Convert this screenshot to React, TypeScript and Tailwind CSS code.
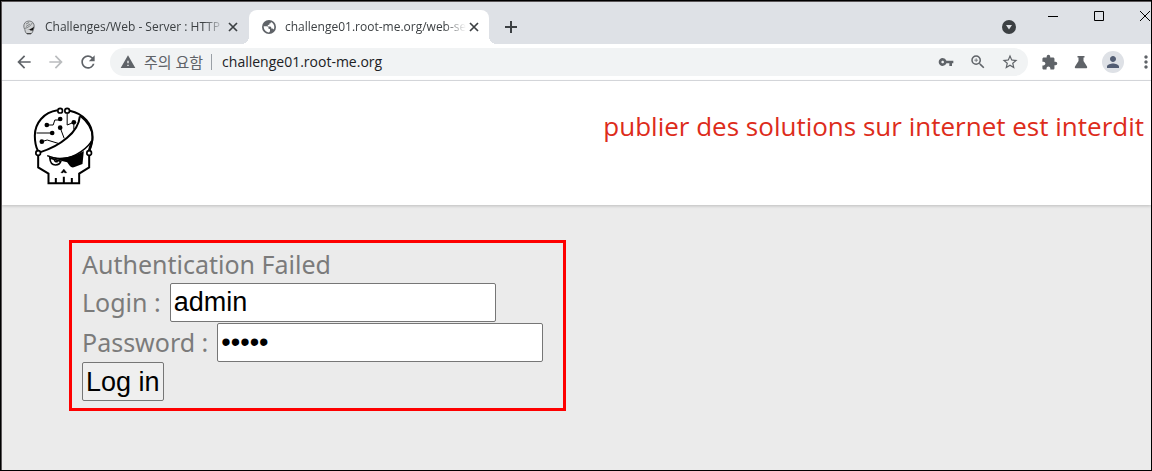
import { useState } from 'react';
import type { ReactNode } from 'react';
import {
  MdArrowBack,
  MdArrowForward,
  MdRefresh,
  MdWarning,
  MdVpnKey,
  MdZoomIn,
  MdStarBorder,
  MdExtension,
  MdPerson,
  MdMoreVert,
} from 'react-icons/md';

function SkullLogo({ className }: { className: string }) {
  return (
    <svg viewBox="40 36 182 234" className={className} fill="none" stroke="currentColor" aria-label="Root Me" role="img">
      {/* Skull outline */}
      <path d="M113 46C72 52 45 84 45 122C45 142 49 157 54 167" strokeWidth="6" />
      <path d="M150 47C192 56 218 88 218 124C218 144 213 158 208 167" strokeWidth="6" />
      <path d="M55 180V217L86 236V265H178V236L208 217V180" strokeWidth="6" />
      <path d="M108 265V249M132 265V245M156 265V249" strokeWidth="6" />
      {/* Bandana */}
      <path d="M60 172C120 154 176 112 180 64" strokeWidth="6" />
      <path d="M180 62C208 84 222 112 217 140" strokeWidth="5" />
      <path d="M216 138C192 172 148 196 112 191C100 189 92 186 82 182" strokeWidth="4" />
      <path d="M208 166L216 138" strokeWidth="7" />
      {/* Eyes and nose */}
      <path d="M82 180C108 194 156 190 192 168L188 207L164 216C158 219 152 216 148 210L142 202L126 198Z" fill="currentColor" stroke="none" />
      <path d="M90 189C91 203 98 210 107 210C115 210 121 206 123 199Z" fill="#fff" strokeWidth="5" />
      <path d="M103 193C104 200 109 202 114 199" strokeWidth="4" />
      <path d="M123 233L132 222L141 233L135 234L132 230L129 234Z" fill="currentColor" strokeWidth="1" />
      {/* Circuit traces */}
      <path d="M81 90H100L105 75H121M50 114H97M66 140L82 135L118 146M121 98L133 130M142 50V90L162 82V103" strokeWidth="3" />
      <g fill="currentColor" stroke="none">
        <circle cx="81" cy="90" r="7" />
        <circle cx="121" cy="72" r="7" />
        <circle cx="97" cy="114" r="7" />
        <circle cx="66" cy="140" r="7" />
        <circle cx="121" cy="98" r="7" />
        <circle cx="162" cy="82" r="7" />
      </g>
      <g fill="#fff" strokeWidth="5">
        <circle cx="121" cy="47" r="7" />
        <circle cx="142" cy="47" r="7" />
        <circle cx="55" cy="174" r="7" />
        <circle cx="208" cy="174" r="7" />
      </g>
    </svg>
  );
}

function SkullFavicon() {
  return (
    <svg viewBox="0 0 12 15" className="w-3 h-[15px]" fill="none" stroke="#76797c">
      <path d="M6 1C2.500 1 .8 3.500.8 6c0 1.500.4 2.500 1 3.500l.6 2.500L4 14h4l1.600-2 .8-2.500c.6-1 .8-2 .8-3.500C11.200 3 9 1 6 1z" fill="#d0d2d4" />
      <path d="M1.500 8.500C5 8 8.500 5 9.500 2.500M3 4l3-1.500M3 6.500L7 4" strokeWidth=".9" />
      <path d="M3 9.500C6 10 9 8.500 11 6.500L10 10.500 7.500 10.500 6.500 9.500z" fill="#111" stroke="none" />
      <path d="M4 13.500h4" stroke="#444" />
    </svg>
  );
}

function Globe() {
  return (
    <svg viewBox="0 0 14 14" className="size-[14px]">
      <circle cx="7" cy="7" r="7" fill="#5f6368" />
      <path d="M1.700 6.200l3.600.1 1.200 1.200v1.300l1.500.2v2.200l-1 1.200C4 12 1.700 9.800 1.700 6.200z" fill="#fff" />
      <path d="M8.800 2c2.200.8 3.500 2.800 3.500 5 0 1-.2 1.800-.6 2.500L10.500 8.500H9.200V7.300L8.300 6.400H5.800V5l1.500-.2.3-1.500h1.200z" fill="#fff" />
    </svg>
  );
}

function Flask() {
  return (
    <svg viewBox="0 0 14 14" className="size-[14px]" fill="currentColor">
      <path d="M3.500 1h7v1.500H9.500V6L13 11.500c.6 1-.1 1.800-1 1.800H2c-.9 0-1.600-.8-1-1.800L4.500 6V2.500h-1z" />
    </svg>
  );
}

interface TabProps {
  title: string;
  icon: ReactNode;
  active?: boolean;
}

function Tab({ title, icon, active }: TabProps) {
  return (
    <div
      className={`relative flex items-center h-[34px] w-60 pl-3 pr-2 rounded-t-lg ${active ? 'bg-white' : ''}`}
    >
      {active && (
        <>
          <span className="absolute bottom-0 -left-2 size-2 bg-[radial-gradient(circle_at_0_0,#dee1e6_8px,#fff_8px)]" />
          <span className="absolute bottom-0 -right-2 size-2 bg-[radial-gradient(circle_at_100%_0,#dee1e6_8px,#fff_8px)]" />
        </>
      )}
      <span className="flex justify-center shrink-0 w-4">{icon}</span>
      <span className="flex-1 ml-2 whitespace-nowrap text-xs text-[#3c4043] [mask-image:linear-gradient(to_right,#000_88%,transparent)]">
        {title}
      </span>
      <button aria-label="Close tab" className="flex justify-center shrink-0 w-4 text-[#3c4043]">
        <svg viewBox="0 0 10 10" className="size-[10px]" stroke="currentColor" strokeWidth="1.7">
          <path d="M1 1l8 8M9 1L1 9" />
        </svg>
      </button>
    </div>
  );
}

function IconButton({ label, children }: { label: string; children: ReactNode }) {
  return (
    <button aria-label={label} className="flex items-center justify-center shrink-0 w-8 h-7">
      {children}
    </button>
  );
}

export default function App() {
  const [login, setLogin] = useState('admin');
  const [password, setPassword] = useState('admin');

  return (
    <div className="flex flex-col min-h-screen overflow-hidden border border-black bg-[#ebebeb] font-['Open_Sans','Noto_Sans_CJK_KR',sans-serif]">
      <div className="flex flex-col flex-1 border-t border-l border-[#5a5658]">
        {/* Tab strip */}
        <div className="flex items-end h-[42px] pl-[7px] overflow-hidden bg-[#dee1e6]">
          <Tab title="Challenges/Web - Server : HTTP" icon={<SkullFavicon />} />
          <Tab title="challenge01.root-me.org/web-se" icon={<Globe />} active />
          <button aria-label="New tab" className="flex items-center justify-center w-7 h-[34px] ml-2 text-[#3c4043]">
            <svg viewBox="0 0 12 12" className="size-3" stroke="currentColor" strokeWidth="2">
              <path d="M6 0v12M0 6h12" />
            </svg>
          </button>
          <div className="flex self-start ml-auto">
            <button aria-label="Search tabs" className="flex justify-center w-8 pt-[18px] mr-[5px]">
              <svg viewBox="0 0 14 14" className="size-[14px]">
                <circle cx="7" cy="7" r="7" fill="#3c4043" />
                <path d="M4 5h6L7 9.500z" fill="#dee1e6" />
              </svg>
            </button>
            <button aria-label="Minimize" className="flex justify-center w-[46px] pt-[9px]">
              <svg viewBox="0 0 10 10" className="size-[10px]" stroke="#000"><path d="M0 5.500h10" /></svg>
            </button>
            <button aria-label="Maximize" className="flex justify-center w-[46px] pt-[9px]">
              <svg viewBox="0 0 10 10" className="size-[10px]" fill="none" stroke="#000"><path d="M.5.5h9v9h-9z" /></svg>
            </button>
            <button aria-label="Close" className="flex justify-center w-[46px] pt-[9px] -mr-[17px]">
              <svg viewBox="0 0 10 10" className="size-[10px]" stroke="#000"><path d="M0 0l10 10M10 0L0 10" /></svg>
            </button>
          </div>
        </div>

        {/* Toolbar */}
        <div className="flex items-center h-[37px] pl-[6px] border-b border-[#dadce0] bg-white text-[#5f6368]">
          <IconButton label="Back"><MdArrowBack size={20} /></IconButton>
          <IconButton label="Forward"><MdArrowForward size={20} color="#babcbe" /></IconButton>
          <IconButton label="Reload"><MdRefresh size={20} /></IconButton>
          <div className="flex items-center flex-1 h-7 ml-1.5 pl-2.5 pr-0.5 rounded-full bg-[#f1f3f4]">
            <MdWarning size={16} className="shrink-0" />
            <span className="ml-2 pr-2 border-r border-[#9aa0a6] text-[15px] leading-4 whitespace-nowrap">주의 요함</span>
            <input
              aria-label="Address"
              defaultValue="challenge01.root-me.org"
              className="flex-1 min-w-0 ml-2.5 bg-transparent outline-none text-sm text-[#202124]"
            />
            <IconButton label="Saved passwords"><MdVpnKey size={16} /></IconButton>
            <IconButton label="Zoom"><MdZoomIn size={18} /></IconButton>
            <IconButton label="Bookmark"><MdStarBorder size={18} /></IconButton>
          </div>
          <div className="flex items-center ml-[5px]">
            <IconButton label="Extensions"><MdExtension size={17} /></IconButton>
            <IconButton label="Labs"><Flask /></IconButton>
            <IconButton label="Profile">
              <span className="flex items-center justify-center size-[22px] rounded-full bg-[#dee1e6] text-[#525d73]">
                <MdPerson size={18} />
              </span>
            </IconButton>
            <button aria-label="Menu" className="flex items-center w-[22px] h-7 pl-[7px] overflow-hidden">
              <MdMoreVert size={20} className="shrink-0" />
            </button>
          </div>
        </div>

        {/* Page */}
        <header className="flex items-start justify-between h-[124px] pt-[26px] pl-[31px] pr-[7px] bg-white shadow-[0_1px_3px_rgba(0,0,0,0.2)]">
          <SkullLogo className="w-[61px] h-[78px] text-black" />
          <p className="text-[26px] leading-[38px] text-[#dd2c1b]">
            publier des solutions sur internet est interdit
          </p>
        </header>

        <main className="px-[67px] pt-[35px]">
          <form
            onSubmit={(e) => e.preventDefault()}
            className="w-[497px] max-w-full pt-[3px] pb-[7px] px-2.5 border-3 border-[#fe0000] text-[25px] leading-9 text-[#7b7b7b] font-['Noto_Sans',sans-serif]"
          >
            <p className="h-[37px]">Authentication Failed</p>
            <div className="flex items-center gap-[9px] mb-px">
              <label htmlFor="login" className="pb-0.5">Login :</label>
              <input
                id="login"
                value={login}
                onChange={(e) => setLogin(e.target.value)}
                className="w-[326px] h-[39px] px-[3px] rounded-xs border border-[#767676] bg-white text-[27px] text-black font-['Liberation_Sans',sans-serif]"
              />
            </div>
            <div className="flex items-center gap-[9px]">
              <label htmlFor="password" className="pb-0.5">Password :</label>
              <input
                id="password"
                type="password"
                value={password}
                onChange={(e) => setPassword(e.target.value)}
                className="w-[326px] h-[39px] px-[3px] rounded-xs border border-[#767676] bg-white text-[27px] text-black font-['Liberation_Sans',sans-serif]"
              />
            </div>
            <button
              type="submit"
              className="block h-[39px] px-[3px] rounded-xs border border-[#767676] bg-[#efefef] text-[27px] text-black font-['Liberation_Sans',sans-serif]"
            >
              Log in
            </button>
          </form>
        </main>
      </div>
    </div>
  );
}
